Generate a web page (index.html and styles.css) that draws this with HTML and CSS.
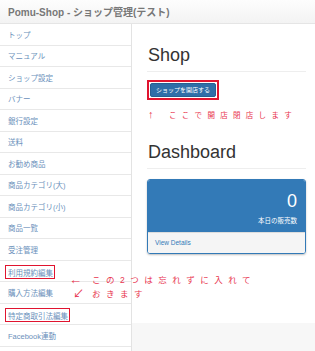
FILE: index.html
```html
<!DOCTYPE html>
<html lang="ja">
<head>
<meta charset="utf-8">
<title>Pomu-Shop</title>
<link rel="stylesheet" href="styles.css">
</head>
<body>
<header class="navbar"><span class="brand">Pomu-Shop - ショップ管理(テスト)</span></header>
<div class="wrap">
  <nav class="sidebar">
    <a class="item">トップ</a>
    <a class="item">マニュアル</a>
    <a class="item">ショップ設定</a>
    <a class="item">バナー</a>
    <a class="item">銀行設定</a>
    <a class="item">送料</a>
    <a class="item">お勧め商品</a>
    <a class="item">商品カテゴリ(大)</a>
    <a class="item">商品カテゴリ(小)</a>
    <a class="item">商品一覧</a>
    <a class="item">受注管理</a>
    <a class="item"><span class="hl">利用規約編集</span></a>
    <a class="item">購入方法編集</a>
    <a class="item"><span class="hl">特定商取引法編集</span></a>
    <a class="item">Facebook連動</a>
  </nav>
  <main class="main">
    <div class="page">
      <h1 class="page-header">Shop</h1>
      <div class="btn-box"><button class="btn">ショップを開店する</button></div>
      <p class="note note-top"><span class="up">↑</span>ここで開店閉店します</p>
      <h1 class="page-header dash">Dashboard</h1>
      <div class="panel">
        <div class="panel-heading">
          <div class="huge">0</div>
          <div class="label">本日の販売数</div>
        </div>
        <div class="panel-footer">View Details</div>
      </div>
    </div>
    <div class="foot"></div>
  </main>
  <div class="note2">
    <div class="arrows"><span class="ar1">←</span><span class="ar2">↙</span></div>
    <p class="note2-text">この2つは忘れずに入れて<br>おきます</p>
  </div>
</div>
</body>
</html>
```
FILE: styles.css
```css
* { box-sizing: border-box; }
html, body { margin: 0; padding: 0; }
body {
  width: 315px;
  height: 351px;
  overflow: hidden;
  font-family: "Liberation Sans", "Noto Sans CJK JP", sans-serif;
  background: #fff;
  color: #333;
}
.navbar {
  height: 24px;
  display: flex;
  align-items: center;
  padding-left: 8px;
  background: linear-gradient(#fdfdfd, #f3f3f3);
  border-bottom: 1px solid #e5e5e5;
}
.brand {
  font-size: 10px;
  font-weight: bold;
  color: #777;
}
.wrap {
  position: relative;
  display: flex;
  height: 327px;
}
.sidebar {
  width: 132px;
  border-right: 1px solid #e3e3e3;
  display: flex;
  flex-direction: column;
  background: #fff;
}
.item {
  height: 21.5px;
  flex: none;
  display: flex;
  align-items: center;
  padding-left: 8px;
  border-bottom: 1px solid #e8e8e8;
  font-size: 7.5px;
  color: #6a90bb;
}
.hl {
  border: 1.5px solid #e0142f;
  padding: 1px 1px 0 2px;
  margin-left: -3px;
  margin-top: 3px;
}
.main {
  flex: 1;
  display: flex;
  flex-direction: column;
  background: #f7f7f7;
}
.page {
  height: 299px;
  background: #fff;
  padding: 22px 9px 0 15px;
}
.page-header {
  margin: 0;
  font-size: 18px;
  font-weight: normal;
  line-height: 1.1;
  padding: 0 0 5px 1px;
  border-bottom: 1px solid #eee;
  color: #333;
}
.btn-box {
  display: inline-block;
  margin-top: 8px;
  border: 2px solid #e0142f;
  padding: 1px;
}
.btn {
  display: block;
  width: 66px;
  height: 14px;
  padding: 0;
  border: 1px solid #285f91;
  border-radius: 2px;
  background: #2f6ea8;
  color: #fff;
  font-family: "Liberation Sans", "Noto Sans CJK JP", sans-serif;
  font-size: 6px;
  line-height: 12px;
}
.note {
  margin: 0;
  color: #e8344e;
  font-size: 7.5px;
  line-height: 10px;
  letter-spacing: 5.3px;
  white-space: nowrap;
}
.note-top { margin-top: 9px; padding-left: 1px; }
.up {
  font-size: 11px;
  letter-spacing: 0;
  display: inline-block;
  width: 21px;
}
.dash { margin-top: 22px; }
.panel {
  margin-top: 10px;
  border: 1px solid #337ab7;
  border-radius: 3px;
  overflow: hidden;
  box-shadow: 0 1px 2px rgba(0,0,0,0.25);
}
.panel-heading {
  height: 52px;
  background: #337ab7;
  color: #fff;
  text-align: right;
  padding: 12px 8px 0 8px;
}
.huge {
  font-size: 18px;
  line-height: 18px;
}
.label {
  margin-top: 7px;
  font-size: 6.5px;
  line-height: 8px;
}
.panel-footer {
  height: 21px;
  background: #f5f5f5;
  border-top: 1px solid #ddd;
  padding-left: 7px;
  font-size: 6.5px;
  line-height: 20px;
  color: #337ab7;
}
.foot { flex: 1; }
.note2 {
  position: absolute;
  left: 69px;
  top: 249px;
  display: flex;
  color: #e8344e;
}
.arrows {
  width: 23px;
  display: flex;
  flex-direction: column;
  line-height: 14px;
}
.ar1 { display: block; font-size: 13px; }
.ar2 { display: block; font-size: 11px; padding-left: 4px; }
.note2-text {
  margin: 0;
  white-space: nowrap;
  font-size: 8.5px;
  line-height: 14px;
  letter-spacing: 5.5px;
}
```
